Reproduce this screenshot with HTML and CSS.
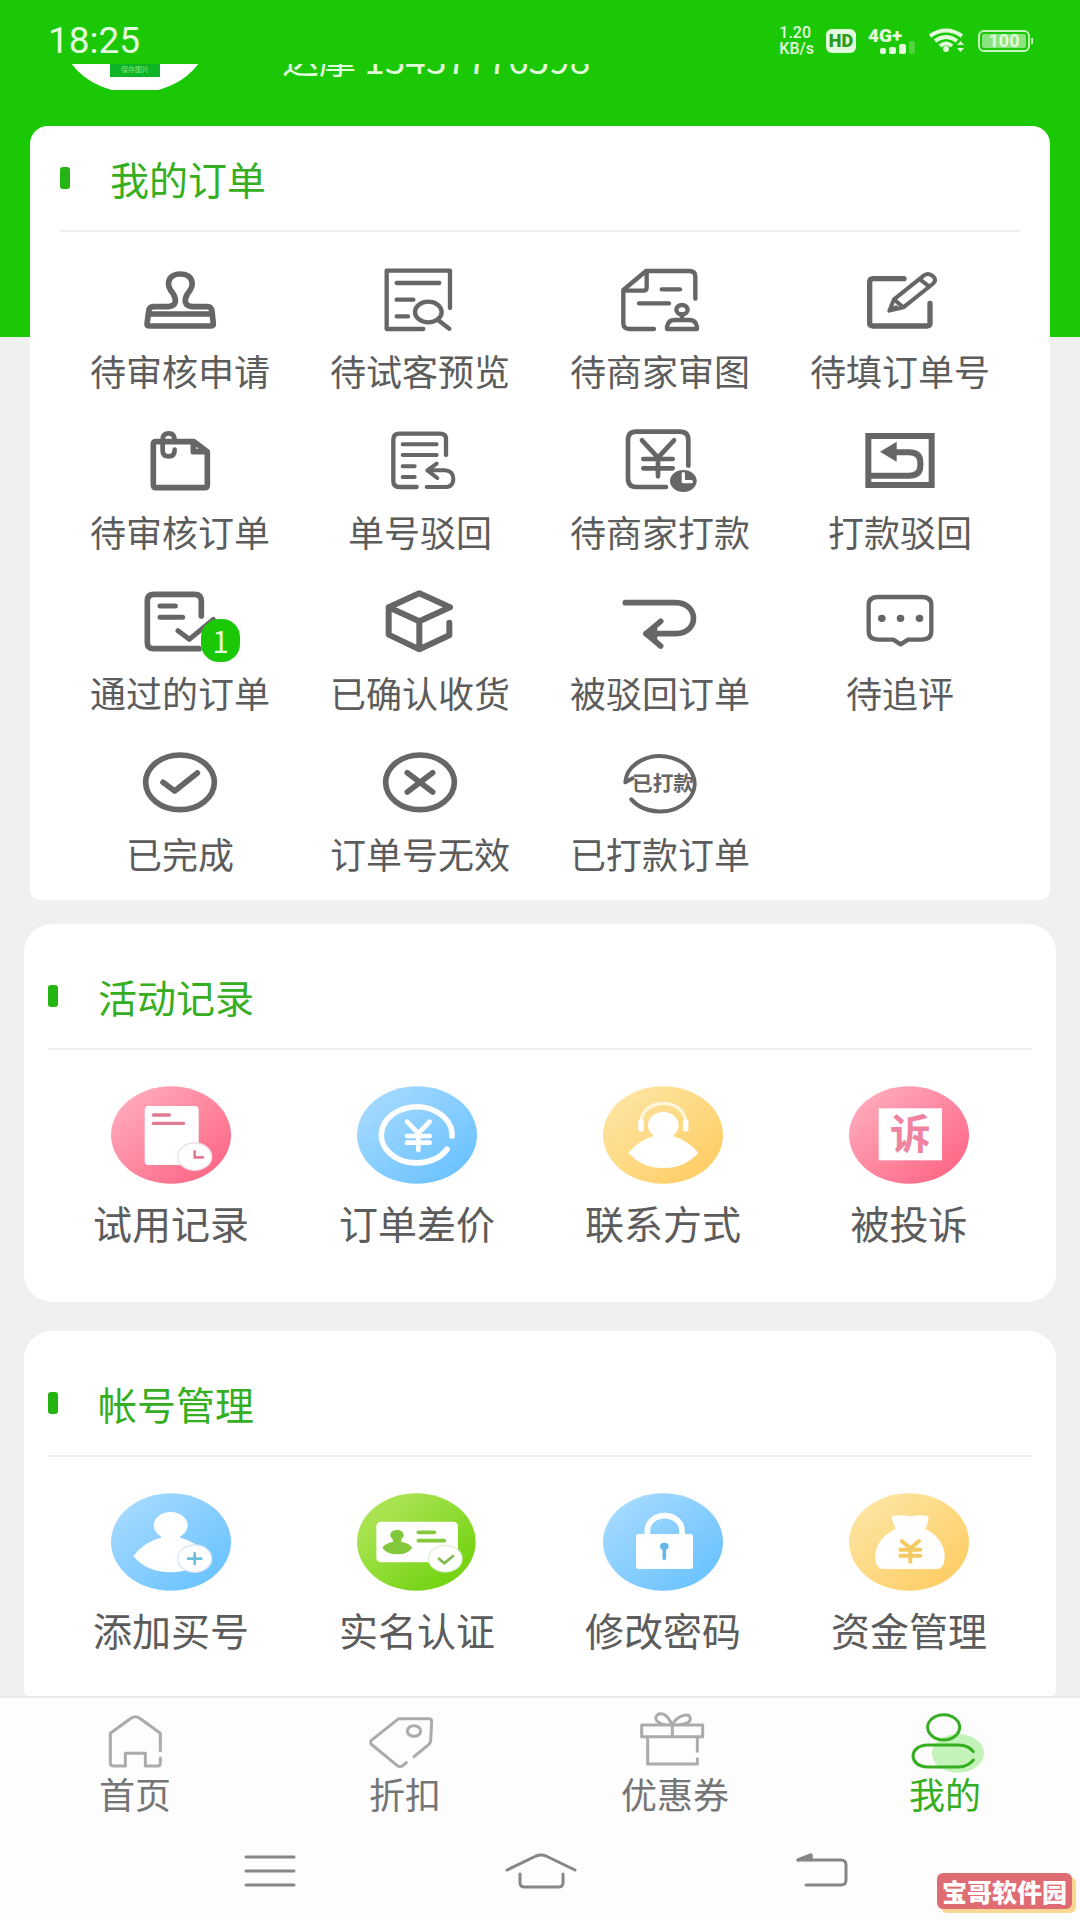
FILE: index.html
```html
<!doctype html>
<html lang="zh-CN">

<head>
  <title>我的</title>
  <meta charset="UTF-8">
  <meta name="viewport" content="width=device-width, initial-scale=1">
  <link rel="stylesheet" href="styles.css">
</head>

<body>
  <header class="top">
    <div class="status">
      <span class="time">18:25</span>
      <span class="speed">1.20<br>KB/s</span>
      <span class="hd">HD</span>
      <svg class="signal" viewBox="0 0 48 26">
        <text x="0" y="14">4G+</text>
        <rect x="12" y="20" width="6" height="6" rx="2" />
        <rect x="21" y="19" width="7" height="7" rx="2" />
        <rect x="31" y="16" width="7" height="10" rx="2" />
        <rect x="41" y="13" width="6" height="13" rx="2" opacity=".25" />
      </svg>
      <svg class="wifi" viewBox="0 0 38 24">
        <path d="M2 7 Q18 -4 34 7" />
        <path d="M7 12 Q18 4 29 12" />
        <path d="M12 17 Q18 12 24 17" />
        <circle cx="18" cy="20" r="3" />
        <path class="solid" d="M29 16 L32.500 12 L36 16Z M29 19 L32.500 23 L36 19Z" />
      </svg>
      <span class="battery">100</span>
    </div>
    <div class="profile">
      <svg class="avatar" viewBox="0 0 146 113">
        <ellipse cx="73" cy="58" rx="73" ry="58" fill="#fff" />
        <rect x="48" y="50" width="50" height="50" fill="#0db526" />
        <text x="59" y="95">保存图片</text>
      </svg>
      <span class="name">达摩 13437776598</span>
    </div>
  </header>

  <main>
    <section class="card orders">
      <h2>我的订单</h2>
      <div class="grid">
        <a href="#" class="item">
          <svg class="line" viewBox="0 0 216 192" stroke-width="17">
            <path d="M73 116 C98 114 98 96 88 78 C76 64 72 52 74 42 C77 26 92 18 109 18 C126 18 141 26 144 42 C146 52 142 64 130 78 C120 96 120 114 145 116 H190 Q202 116 204 130 L208 168 Q208 174 200 174 H17 Q9 174 9 168 L14 130 Q16 116 28 116Z M14 138 H204" />
          </svg>
          <span>待审核申请</span>
        </a>
        <a href="#" class="item">
          <svg class="line" viewBox="0 0 216 192" stroke-width="13">
            <path d="M198 120 V8 H8 V183 H118 M38 45 H166 M38 95 H88 M38 145 H72 M165 158 L196 182" />
            <ellipse cx="133" cy="132" rx="40" ry="31" />
          </svg>
          <span>待试客预览</span>
        </a>
        <a href="#" class="item">
          <svg class="line" viewBox="0 0 216 192" stroke-width="13">
            <path d="M214 92 V26 Q214 9 196 9 H66 L-2 66 V166 Q-2 183 16 183 H90 M68 9 V58 Q68 68 58 68 H0 M113 64 H168 M45 106 H135" />
            <ellipse cx="174" cy="125" rx="17" ry="14" />
            <path d="M174 139 V156 M129 183 V176 Q133 156 152 156 H196 Q215 156 219 176 V183Z" />
          </svg>
          <span>待商家审图</span>
        </a>
        <a href="#" class="item">
          <svg class="line" viewBox="0 0 216 192" stroke-width="16">
            <path d="M120 32 H28 Q17 32 17 42 V166 Q17 174 28 174 H188 Q198 174 198 166 V106" />
            <path stroke-width="12" d="M76 128 L90 94 L180 22 Q192 14 203 22 L210 28 Q218 38 206 48 L118 118Z M168 34 L196 56 M92 96 L116 116 M78 126 L96 118" />
          </svg>
          <span>待填订单号</span>
        </a>

        <a href="#" class="item">
          <svg class="line" viewBox="0 0 216 192" stroke-width="17">
            <path d="M36 38 H150 L190 68 V168 Q190 176 182 176 H36 Q28 176 28 168 V46 Q28 38 36 38Z M148 42 V68 H186" />
            <path stroke-width="14" d="M92 34 Q92 13 74 13 Q56 13 56 32 V66 Q56 82 74 82 Q92 82 92 62" />
          </svg>
          <span>待审核订单</span>
        </a>
        <a href="#" class="item">
          <svg class="line" viewBox="0 0 216 192" stroke-width="13">
            <path d="M186 78 V30 Q186 14 168 14 H46 Q28 14 28 32 V156 Q28 174 46 174 H98" />
            <path stroke-width="12" d="M56 46 H158 M56 78 H158 M56 112 H92 M56 144 H92 M158 104 L130 124 L160 147 M132 124 H182 Q208 126 208 149 Q208 174 182 174 H128" />
          </svg>
          <span>单号驳回</span>
        </a>
        <a href="#" class="item">
          <svg class="line" viewBox="0 0 216 192" stroke-width="14">
            <path d="M193 110 V34 Q193 8 168 8 H36 Q12 8 12 34 V148 Q12 174 36 174 H126" />
            <path d="M54 34 L102 86 L150 34 M102 86 V142 M58 90 H146 M58 118 H146" />
            <ellipse cx="178" cy="156" rx="40" ry="33" fill="#666" stroke="none" />
            <path stroke="#fff" stroke-width="10" d="M178 134 V158 H202" />
          </svg>
          <span>待商家打款</span>
        </a>
        <a href="#" class="item">
          <svg class="line square" viewBox="0 0 216 192" stroke-width="18">
            <rect x="13" y="21" width="190" height="147" />
            <path d="M92 70 H134 Q169 70 169 100 V110 Q169 140 134 140 H20" />
            <path fill="#666" stroke="none" d="M48 68 L98 38 V98Z" />
          </svg>
          <span>打款驳回</span>
        </a>

        <a href="#" class="item">
          <span class="icon">
            <svg class="line" viewBox="0 0 216 192" stroke-width="17">
              <path d="M172 78 V34 Q172 13 152 13 H30 Q10 13 10 32 V158 Q10 176 30 176 H165" />
              <path stroke-width="15" d="M48 48 H94 M48 82 H116 M102 122 L136 148 L208 88" />
            </svg>
            <b class="badge">1</b>
          </span>
          <span>通过的订单</span>
        </a>
        <a href="#" class="item">
          <svg class="line" viewBox="0 0 216 192" stroke-width="18">
            <path d="M196 98 V136 L106 178 L14 134 V52 L106 10 L198 52 L106 94 L14 52 M106 94 V178" />
          </svg>
          <span>已确认收货</span>
        </a>
        <a href="#" class="item">
          <svg class="line" viewBox="0 0 216 192" stroke-width="17">
            <path d="M4 38 H156 C226 40 226 130 156 131 H66 M110 94 L66 131 L110 168" />
            <path fill="#666" stroke="none" d="M62 131 L100 102 V160Z" />
          </svg>
          <span>被驳回订单</span>
        </a>
        <a href="#" class="item">
          <svg class="line" viewBox="0 0 216 192" stroke-width="13">
            <path d="M44 21 H172 Q202 21 202 44 V124 Q202 149 172 149 H132 L110 163 L88 149 H44 Q14 149 14 124 V44 Q14 21 44 21Z" />
            <path stroke-width="22" d="M53 85 H54 M109 85 H110 M166 85 H167" />
          </svg>
          <span>待追评</span>
        </a>

        <a href="#" class="item">
          <svg class="line" viewBox="0 0 216 192" stroke-width="17">
            <ellipse cx="108" cy="94" rx="103" ry="82" />
            <path d="M57 94 L92 120 L160 66" />
          </svg>
          <span>已完成</span>
        </a>
        <a href="#" class="item">
          <svg class="line" viewBox="0 0 216 192" stroke-width="17">
            <ellipse cx="108" cy="94" rx="103" ry="82" />
            <path d="M70 65 L146 123 M146 65 L70 123" />
          </svg>
          <span>订单号无效</span>
        </a>
        <a href="#" class="item">
          <svg class="line" viewBox="0 0 216 192" stroke-width="12">
            <path d="M26 82 L4 94 A104 83 0 1 1 22 145" />
            <text x="24" y="119">已打款</text>
          </svg>
          <span>已打款订单</span>
        </a>
      </div>
    </section>

    <section class="card records">
      <h2>活动记录</h2>
      <div class="grid">
        <a href="#" class="item">
          <svg class="round" viewBox="0 0 360 294">
            <defs>
              <linearGradient id="pink" x1="0" y1="0" x2="1" y2="1">
                <stop offset=".1" stop-color="#ffabbc" />
                <stop offset=".9" stop-color="#fd6685" />
              </linearGradient>
              <linearGradient id="blue" x1="0" y1="0" x2="1" y2="1">
                <stop offset=".1" stop-color="#a6daff" />
                <stop offset=".9" stop-color="#69c2ff" />
              </linearGradient>
              <linearGradient id="yellow" x1="0" y1="0" x2="1" y2="1">
                <stop offset=".1" stop-color="#fde5a3" />
                <stop offset=".9" stop-color="#fecd63" />
              </linearGradient>
              <linearGradient id="green" x1="0" y1="0" x2="1" y2="1">
                <stop offset=".2" stop-color="#a9e352" />
                <stop offset=".8" stop-color="#76d415" />
              </linearGradient>
            </defs>
            <ellipse cx="180" cy="147" rx="180" ry="146" fill="url(#pink)" />
            <rect x="101" y="60" width="162" height="177" rx="12" fill="#fff" />
            <path d="M127 87 H175 M127 112 H218" stroke="#e07a92" stroke-width="10" />
            <ellipse cx="251" cy="212" rx="51" ry="41" fill="#fff" stroke="#f0dfe4" stroke-width="4" />
            <path d="M251 196 V214 H276" stroke="#e07a92" stroke-width="8" />
          </svg>
          <span>试用记录</span>
        </a>
        <a href="#" class="item">
          <svg class="round" viewBox="0 0 360 294">
            <ellipse cx="180" cy="147" rx="180" ry="146" fill="url(#blue)" />
            <path d="M285 150 A106 84 0 1 0 270 190" stroke="#fff" stroke-width="17" />
            <path d="M150 107 L184 142 L218 107 M184 142 V192 M150 150 H218 M150 170 H218" stroke="#fff" stroke-width="14" />
          </svg>
          <span>订单差价</span>
        </a>
        <a href="#" class="item">
          <svg class="round" viewBox="0 0 360 294">
            <ellipse cx="180" cy="147" rx="180" ry="146" fill="url(#yellow)" />
            <path d="M114 112 C114 32 248 32 248 112" stroke="#fff6dc" stroke-width="10" />
            <path d="M114 108 V128 M248 108 V128" stroke="#fff" stroke-width="17" />
            <ellipse cx="181" cy="118" rx="46" ry="40" fill="#fff" />
            <path d="M76 200 Q106 164 152 150 V130 H210 V150 Q256 164 286 200 Q246 246 181 246 Q116 246 76 200Z" fill="#fff" />
          </svg>
          <span>联系方式</span>
        </a>
        <a href="#" class="item">
          <svg class="round" viewBox="0 0 360 294">
            <ellipse cx="180" cy="147" rx="180" ry="146" fill="url(#pink)" />
            <rect x="89" y="67" width="190" height="156" fill="#fff" />
            <text x="184" y="189" font-size="122" text-anchor="middle" fill="#f084a0">诉</text>
          </svg>
          <span>被投诉</span>
        </a>
      </div>
    </section>

    <section class="card account">
      <h2>帐号管理</h2>
      <div class="grid">
        <a href="#" class="item">
          <svg class="round" viewBox="0 0 360 294">
            <ellipse cx="180" cy="147" rx="180" ry="146" fill="url(#blue)" />
            <ellipse cx="179" cy="97" rx="51" ry="40" fill="#fff" />
            <path d="M67 190 Q98 146 150 134 V116 H208 V134 Q260 146 290 190 Q250 238 179 238 Q108 238 67 190Z" fill="#fff" />
            <ellipse cx="251" cy="197" rx="51" ry="41" fill="#fff" stroke="#dbe6f2" stroke-width="4" />
            <path d="M251 181 V213 M231 197 H271" stroke="#6cbfd8" stroke-width="8" />
          </svg>
          <span>添加买号</span>
        </a>
        <a href="#" class="item">
          <svg class="round" viewBox="0 0 360 294">
            <ellipse cx="178" cy="147" rx="178" ry="146" fill="url(#green)" />
            <rect x="58" y="86" width="245" height="122" rx="14" fill="#fff" />
            <ellipse cx="120" cy="127" rx="20" ry="17" fill="#83c83a" />
            <path d="M108 135 H132 V146 Q158 150 166 164 Q152 184 121 184 Q90 184 76 164 Q84 150 108 146Z" fill="#83c83a" />
            <path d="M184 118 H232 M184 143 H262" stroke="#83c83a" stroke-width="11" />
            <ellipse cx="265" cy="197" rx="50" ry="40" fill="#fff" stroke="#e0eed4" stroke-width="4" />
            <path d="M246 197 L262 211 L288 189" stroke="#83b84e" stroke-width="8" />
          </svg>
          <span>实名认证</span>
        </a>
        <a href="#" class="item">
          <svg class="round" viewBox="0 0 360 294">
            <ellipse cx="180" cy="147" rx="180" ry="146" fill="url(#blue)" />
            <path d="M133 125 V112 A52 44 0 0 1 237 112 V125" stroke="#fff" stroke-width="17" />
            <rect x="99" y="123" width="171" height="105" rx="8" fill="#fff" />
            <ellipse cx="184" cy="160" rx="13" ry="11" fill="#62b7e8" />
            <path d="M184 164 V196" stroke="#62b7e8" stroke-width="11" />
          </svg>
          <span>修改密码</span>
        </a>
        <a href="#" class="item">
          <svg class="round" viewBox="0 0 360 294">
            <ellipse cx="180" cy="147" rx="180" ry="146" fill="url(#yellow)" />
            <path d="M134 68 Q158 64 184 70 Q210 64 234 68 Q240 70 238 80 L230 108 Q282 134 287 186 Q288 228 262 228 H104 Q78 228 79 186 Q84 134 140 108 L129 80 Q126 70 134 68Z" fill="#fff" />
            <path d="M158 144 L184 166 L210 144 M184 166 V206 M154 170 H214 M154 188 H214" stroke="#f4ca62" stroke-width="12" />
          </svg>
          <span>资金管理</span>
        </a>
      </div>
    </section>
  </main>

  <nav class="tabs">
    <a href="#">
      <svg viewBox="0 0 198 168">
        <path d="M175 110 V58 L112 12 Q100 4 88 12 L25 58 V146 Q25 156 36 156 H70 V118 H130 V156 H168 Q175 156 175 146 V132" />
      </svg>
      <span>首页</span>
    </a>
    <a href="#">
      <svg viewBox="0 0 198 168">
        <path d="M103 146 L92 155 Q84 160 76 155 L-3 90 Q-6 85 -3 80 L80 14 H172 Q179 14 179 22 L176 80 Q176 86 170 92 L126 128" />
        <ellipse cx="126" cy="51" rx="20" ry="16" />
      </svg>
      <span>折扣</span>
    </a>
    <a href="#">
      <svg viewBox="0 0 198 168">
        <path d="M-1 33 H182 V68 H-1Z M91 33 V68 M166 112 V68 M17 68 V150 H166 V134 M91 33 C40 34 32 10 50 0 C70 -6 82 16 91 33 C100 10 130 -2 142 6 C154 24 130 34 91 33" />
      </svg>
      <span>优惠券</span>
    </a>
    <a href="#" class="active">
      <svg viewBox="0 0 198 168">
        <ellipse cx="138" cy="118" rx="78" ry="58" class="blob" />
        <ellipse cx="95" cy="40" rx="48" ry="38" />
        <path d="M184 113 Q168 93 140 93 H48 C-12 94 -12 158 48 159 H140 Q168 158 184 138" />
      </svg>
      <span>我的</span>
    </a>
  </nav>

  <div class="sysnav">
    <button type="button" aria-label="任务">
      <svg viewBox="0 0 72 36">
        <path d="M12 4 H60 M12 18 H60 M12 32 H60" />
      </svg>
    </button>
    <button type="button" aria-label="主屏幕">
      <svg viewBox="0 0 72 36">
        <path d="M3 17 L32 3 Q37 1 42 3 L71 17 M16 21 V30 Q16 34 21 34 H54 Q59 34 59 30 V21" />
      </svg>
    </button>
    <button type="button" aria-label="返回">
      <svg viewBox="0 0 72 36">
        <path d="M24 7 L37 2 V7 H67 Q72 7 72 12 V27 Q72 32 67 32 H32" />
        <path class="solid" d="M24 7 L37 2 V7Z" />
      </svg>
    </button>
    <span class="mark">宝哥软件园</span>
  </div>
</body>

</html>
```

FILE: styles.css
```css
* {
  box-sizing: border-box;
}

html,
body {
  margin: 0;
}

body {
  min-height: 100vh;
  background-color: #f0f0f0;
  font-family: 'Noto Sans CJK SC', sans-serif;
  color: #5c5c5c;
  display: flex;
  flex-direction: column;
}

a {
  color: inherit;
  text-decoration: none;
}

svg {
  display: block;
  overflow: visible;
  fill: none;
}

/* green header */
.top {
  background-color: #1bc806;
  padding-bottom: 211px;
  color: #e2fbdc;
}

.status {
  height: 64px;
  padding: 18px 50px 0 48px;
  display: flex;
  align-items: center;
  font-family: Roboto, sans-serif;
}

.time {
  font-size: 37px;
  line-height: 46px;
  margin-right: auto;
}

.speed {
  font-size: 16px;
  font-weight: 500;
  line-height: 16px;
}

.hd {
  width: 30px;
  margin: 0 12px;
  border-radius: 6px;
  background-color: #e2fbdc;
  color: #2b9a1d;
  font-size: 18px;
  font-weight: 900;
  line-height: 24px;
  text-align: center;
}

.signal {
  width: 48px;
  height: 26px;
  fill: #e2fbdc;
  font-size: 19px;
  font-weight: 900;
}

.wifi {
  width: 38px;
  height: 24px;
  margin: 0 12px;
  stroke: #e2fbdc;
  stroke-width: 4;
}

.wifi .solid,
.wifi circle {
  fill: #e2fbdc;
  stroke: none;
}

.battery {
  position: relative;
  width: 52px;
  border: 2px solid #c5f5ba;
  border-radius: 6px;
  background-color: #8be37f;
  background-clip: content-box;
  padding: 2px;
  font-size: 18px;
  font-weight: 700;
  line-height: 14px;
  text-align: center;
}

.battery::after {
  content: '';
  position: absolute;
  right: -5px;
  top: 6px;
  width: 2px;
  height: 6px;
  background-color: #c5f5ba;
}

/* scrolled under the status bar, so only its lower edge shows */
.profile {
  height: 62px;
  padding: 0 62px 36px;
  overflow: hidden;
  display: flex;
  align-items: flex-end;
}

.avatar {
  flex: none;
  width: 146px;
  height: 113px;
  overflow: hidden;
  font-size: 7px;
}

.avatar text {
  fill: #8be37f;
}

.name {
  margin: 0 0 12px 74px;
  font-size: 37px;
  line-height: 40px;
  white-space: nowrap;
}

/* cards */
main {
  margin-top: -211px;
}

.card {
  margin: 0 24px;
  padding: 20px 24px 60px;
  border-radius: 28px;
  background-color: #fff;
}

.orders {
  margin: 0 30px;
  padding: 0 30px 27px;
  border-radius: 18px 18px 10px 10px;
}

.records {
  margin-top: 24px;
}

.account {
  margin-top: 29px;
  padding-bottom: 47px;
  border-radius: 28px 28px 6px 6px;
}

.card h2 {
  margin: 0;
  height: 106px;
  border-bottom: 2px solid #efefef;
  display: flex;
  align-items: center;
  gap: 40px;
  color: #35ae22;
  font-size: 39px;
  font-weight: 400;
}

.card h2::before {
  content: '';
  width: 10px;
  height: 22px;
  border-radius: 3px;
  background-color: #24b512;
}

.grid {
  padding-top: 36px;
  display: grid;
  grid-template-columns: repeat(4, 1fr);
  row-gap: 39px;
}

.item {
  display: flex;
  flex-direction: column;
  align-items: center;
  gap: 18px;
  font-size: 39px;
  line-height: 40px;
  white-space: nowrap;
}

.orders .item {
  font-size: 36px;
}

.line {
  width: 72px;
  height: 64px;
  stroke: #666;
  stroke-linecap: round;
  stroke-linejoin: round;
}

.square {
  stroke-linecap: butt;
  stroke-linejoin: miter;
}

.line text {
  fill: #666;
  stroke: none;
  font-size: 62px;
  font-weight: 700;
}

.round {
  width: 120px;
  height: 98px;
  stroke-linecap: round;
  font-weight: 700;
}

.icon {
  position: relative;
}

.badge {
  position: absolute;
  left: 57px;
  top: 29px;
  width: 39px;
  height: 43px;
  border-radius: 18px;
  background-color: #1bc806;
  color: #e2fbdc;
  font-size: 30px;
  font-weight: 400;
  line-height: 42px;
  text-align: center;
}

/* bottom bars */
.tabs {
  border-top: 2px solid #e9e9e9;
  background-color: #fdfdfd;
  padding-top: 16px;
  display: flex;
}

.tabs a {
  flex: 1;
  display: flex;
  flex-direction: column;
  align-items: center;
  gap: 3px;
  color: #757575;
  font-size: 36px;
  line-height: 40px;
}

.tabs svg {
  width: 66px;
  height: 56px;
  stroke: #ababab;
  stroke-width: 9;
  stroke-linecap: round;
  stroke-linejoin: round;
}

.tabs .active {
  color: #35ae22;
}

.active svg {
  stroke: #35ae22;
}

.active .blob {
  fill: #c3f3b8;
  stroke: none;
}

.sysnav {
  position: relative;
  flex: 1;
  background-color: #fdfdfd;
  padding: 36px 135px 27px;
  display: flex;
  justify-content: space-around;
}

.sysnav button {
  border: 0;
  padding: 0;
  background: none;
}

.sysnav svg {
  width: 72px;
  height: 36px;
  stroke: #868686;
  stroke-width: 3;
  stroke-linecap: round;
  stroke-linejoin: round;
}

.sysnav .solid {
  fill: #868686;
}

.mark {
  position: absolute;
  right: 8px;
  bottom: 11px;
  padding: 0 5px;
  border-radius: 6px;
  background-color: #e06c73;
  box-shadow: 4px 4px 0 #fbd793;
  color: #fff;
  font-size: 25px;
  font-weight: 900;
  line-height: 36px;
}
```
